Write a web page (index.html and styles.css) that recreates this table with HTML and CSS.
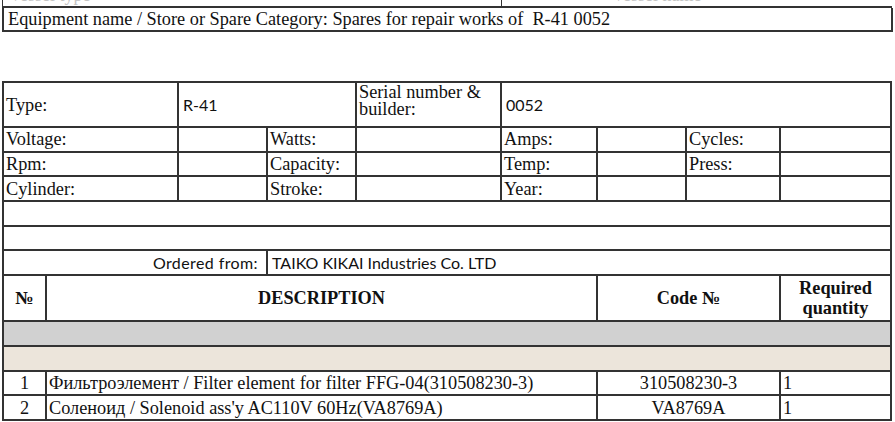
FILE: index.html
```html
<!DOCTYPE html>
<html>
<head>
<meta charset="utf-8">
<link rel="stylesheet" href="styles.css">
</head>
<body>
<div class="sheet">
  <div class="clip-row">
    <div class="clip-cell"><span class="clip-text">Vessel type</span></div>
    <div class="clip-cell"><span class="clip-text shift">Vessel name</span></div>
  </div>
  <div class="equip">Equipment name / Store or Spare Category: Spares for repair works of&nbsp; R-41 0052</div>

  <table class="grid">
    <colgroup>
      <col class="c1"><col class="c2"><col class="c3"><col class="c4"><col class="c5"><col class="c6"><col class="c7"><col class="c8"><col class="c9">
    </colgroup>
    <tr class="r-type">
      <td colspan="2" class="tall">Type:</td>
      <td colspan="2" class="sans tall">R-41</td>
      <td class="two">Serial number &amp; builder:</td>
      <td colspan="4" class="sans tall">0052</td>
    </tr>
    <tr class="r">
      <td colspan="2">Voltage:</td><td></td><td>Watts:</td><td></td><td>Amps:</td><td></td><td>Cycles:</td><td></td>
    </tr>
    <tr class="r">
      <td colspan="2">Rpm:</td><td></td><td>Capacity:</td><td></td><td>Temp:</td><td></td><td>Press:</td><td></td>
    </tr>
    <tr class="r">
      <td colspan="2">Cylinder:</td><td></td><td>Stroke:</td><td></td><td>Year:</td><td></td><td></td><td></td>
    </tr>
    <tr class="r"><td colspan="9"></td></tr>
    <tr class="r"><td colspan="9"></td></tr>
    <tr class="r">
      <td colspan="3" class="sans right">Ordered from:</td>
      <td colspan="6" class="sans">TAIKO KIKAI Industries Co. LTD</td>
    </tr>
    <tr class="r-head">
      <th>№</th>
      <th colspan="5">DESCRIPTION</th>
      <th colspan="2">Code №</th>
      <th>Required quantity</th>
    </tr>
    <tr class="r gray"><td colspan="9"></td></tr>
    <tr class="r beige"><td colspan="9"></td></tr>
    <tr class="r">
      <td class="center">1</td>
      <td colspan="5">Фильтроэлемент / Filter element for filter FFG-04(310508230-3)</td>
      <td colspan="2" class="center">310508230-3</td>
      <td>1</td>
    </tr>
    <tr class="r">
      <td class="center">2</td>
      <td colspan="5">Соленоид / Solenoid ass'y AC110V 60Hz(VA8769A)</td>
      <td colspan="2" class="center">VA8769A</td>
      <td>1</td>
    </tr>
  </table>
</div>
</body>
</html>
```
FILE: styles.css
```css
html, body {
  margin: 0;
  padding: 0;
  background: #fff;
}
body {
  font-family: "Liberation Serif", "Times New Roman", serif;
  font-size: 18.3px;
  color: #111;
}
.sheet {
  padding-left: 2px;
  width: 891px;
}
.clip-row {
  display: grid;
  grid-template-columns: 499px 391px;
  height: 6px;
  width: 890px;
  border-bottom: 2px solid #333;
  overflow: hidden;
}
.clip-cell {
  height: 6px;
  overflow: hidden;
  border-left: 1px solid #333;
}
.clip-text {
  display: block;
  margin-top: -14px;
  padding-left: 6px;
  color: #c4c4c4;
  font-size: 18px;
  line-height: 18px;
}
.clip-text.shift {
  padding-left: 110px;
}
.equip {
  box-sizing: border-box;
  width: 891px;
  height: 24px;
  border-left: 2px solid #333;
  border-right: 2px solid #333;
  border-bottom: 2px solid #333;
  padding-left: 4px;
  line-height: 22px;
  font-size: 18.3px;
  white-space: nowrap;
}
.grid {
  margin-top: 49px;
  border-collapse: collapse;
  table-layout: fixed;
  width: 889px;
  border: 2px solid #333;
}
.c1 { width: 43px; }
.c2 { width: 132px; }
.c3 { width: 89px; }
.c4 { width: 89px; }
.c5 { width: 145px; }
.c6 { width: 96px; }
.c7 { width: 89px; }
.c8 { width: 94px; }
.c9 { width: 111px; }
.grid td, .grid th {
  border: 2px solid #333;
  padding: 0 2px;
  font-size: 18.3px;
  line-height: 20px;
  vertical-align: middle;
  white-space: nowrap;
  overflow: hidden;
}
.r-type td { height: 42px; }
.r td { height: 22.7px; }
.r-head th { height: 44px; }
.grid td.two {
  white-space: normal;
  line-height: 17px;
  vertical-align: top;
  padding-top: 1px;
}
.grid td.sans {
  font-family: Lato, "Liberation Sans", sans-serif;
  font-size: 16px;
  padding-left: 4px;
}
.grid td.right {
  text-align: right;
  padding-right: 8px;
  letter-spacing: 0.4px;
}
.grid td.center { text-align: center; }
.grid th {
  font-weight: bold;
  text-align: center;
}
.grid th:last-child {
  white-space: normal;
  line-height: 20px;
}
.gray td { background: #d1d1d1; }
.beige td { background: #ece5db; }
```
